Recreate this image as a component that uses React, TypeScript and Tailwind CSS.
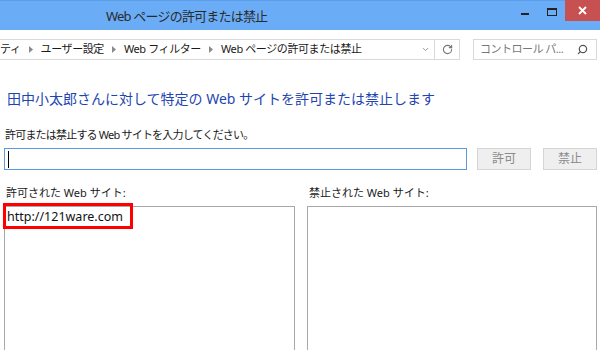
import { RotateCw, ChevronDown, Search } from 'lucide-react'

function Crumb() {
  return (
    <svg width="4" height="7" viewBox="0 0 4 7" className="mx-[8px] shrink-0">
      <path d="M0 0 L4 3.5 L0 7 Z" fill="#8a8a8a" />
    </svg>
  )
}

export default function App() {
  return (
    <div className="w-[600px] h-[350px] overflow-hidden bg-white font-['Noto_Sans','Noto_Sans_CJK_JP',sans-serif] text-[#1a1a1a]">
      {/* title bar */}
      <div className="h-[30px] bg-[#6aadf6] border-t border-[#5b9de6] flex items-start">
        <div className="ml-[106px] mt-[5px] text-[13px] leading-[20px] text-[#2a2a2a] tracking-[-0.8px] whitespace-nowrap">
          Web ページの許可または禁止
        </div>
        <div className="ml-auto flex items-start">
          <div className="mt-[12px] w-[8px] h-[2px] bg-[#222]" />
          <div className="ml-[18px] mt-[7px] w-[10px] h-[8px] border border-t-2 border-[#222]" />
          <div className="ml-[8px] -mt-px w-[35px] h-[21px] bg-[#c75050] flex items-center justify-center">
            <svg width="9" height="9" viewBox="0 0 9 9">
              <path d="M1 1 L8 8 M8 1 L1 8" stroke="#fff" strokeWidth="1.8" />
            </svg>
          </div>
        </div>
      </div>

      {/* address bar */}
      <div className="pt-[9px] flex items-start">
        <div className="w-[460px] h-[21px] border border-l-0 border-[#d9d9d9] flex items-center">
          <div className="flex-1 flex items-center text-[11px] tracking-[-0.4px] text-[#1a1a1a] whitespace-nowrap">
            <span>ティ</span>
            <Crumb />
            <span>ユーザー設定</span>
            <Crumb />
            <span>Web フィルター</span>
            <Crumb />
            <span>Web ページの許可または禁止</span>
          </div>
          <ChevronDown size={9} strokeWidth={2} className="text-[#777] mr-[4px]" />
          <div className="w-[25px] h-full border-l border-[#d9d9d9] flex items-center justify-center">
            <RotateCw size={11} strokeWidth={2.4} className="text-[#777]" />
          </div>
        </div>
        <div className="ml-[13px] w-[124px] h-[21px] border border-[#d9d9d9] flex items-center pl-[6px] pr-[8px]">
          <span className="flex-1 text-[11px] tracking-[-0.5px] text-[#777] whitespace-nowrap">コントロール パ...</span>
          <Search size={11} strokeWidth={2.6} className="text-[#555] -scale-x-100" />
        </div>
      </div>

      {/* heading */}
      <div className="mt-[29px] ml-[7px] text-[14px] leading-[20px] text-[#1e45b0] whitespace-nowrap">
        田中小太郎さんに対して特定の Web サイトを許可または禁止します
      </div>

      <div className="mt-[18px] ml-[5px] text-[11px] leading-[16px] tracking-[-0.8px] whitespace-nowrap">
        許可または禁止する Web サイトを入力してください。
      </div>

      {/* input row */}
      <div className="mt-[5px] flex items-start">
        <div className="ml-[4px] w-[463px] h-[22px] border border-[#5a9be0] flex items-center pl-[3px]">
          <div className="w-px h-[17px] bg-black" />
        </div>
        <button className="ml-[10px] w-[54px] h-[22px] bg-[#efefef] border border-[#d5d5d5] text-[12px] text-[#8a8a8a]">
          許可
        </button>
        <button className="ml-[12px] w-[54px] h-[22px] bg-[#efefef] border border-[#d5d5d5] text-[12px] text-[#8a8a8a]">
          禁止
        </button>
      </div>

      {/* lists */}
      <div className="mt-[15px] flex items-start">
        <div className="ml-[4px] w-[291px]">
          <div className="pl-[2px] text-[11px] leading-[16px] whitespace-nowrap">許可された Web サイト:</div>
          <div className="relative mt-[5px] h-[160px] border border-[#a8a8a8]">
            <div className="pl-[2px] pt-[1px] text-[12.5px] leading-[18px] text-[#111]">http://121ware.com</div>
            <div className="absolute -left-[2px] -top-[4px] w-[130px] h-[26px] border-[3px] border-[#ff0000]" />
          </div>
        </div>
        <div className="ml-[12px] w-[290px]">
          <div className="pl-[2px] text-[11px] leading-[16px] whitespace-nowrap">禁止された Web サイト:</div>
          <div className="mt-[5px] h-[160px] border border-[#a8a8a8]" />
        </div>
      </div>
    </div>
  )
}
